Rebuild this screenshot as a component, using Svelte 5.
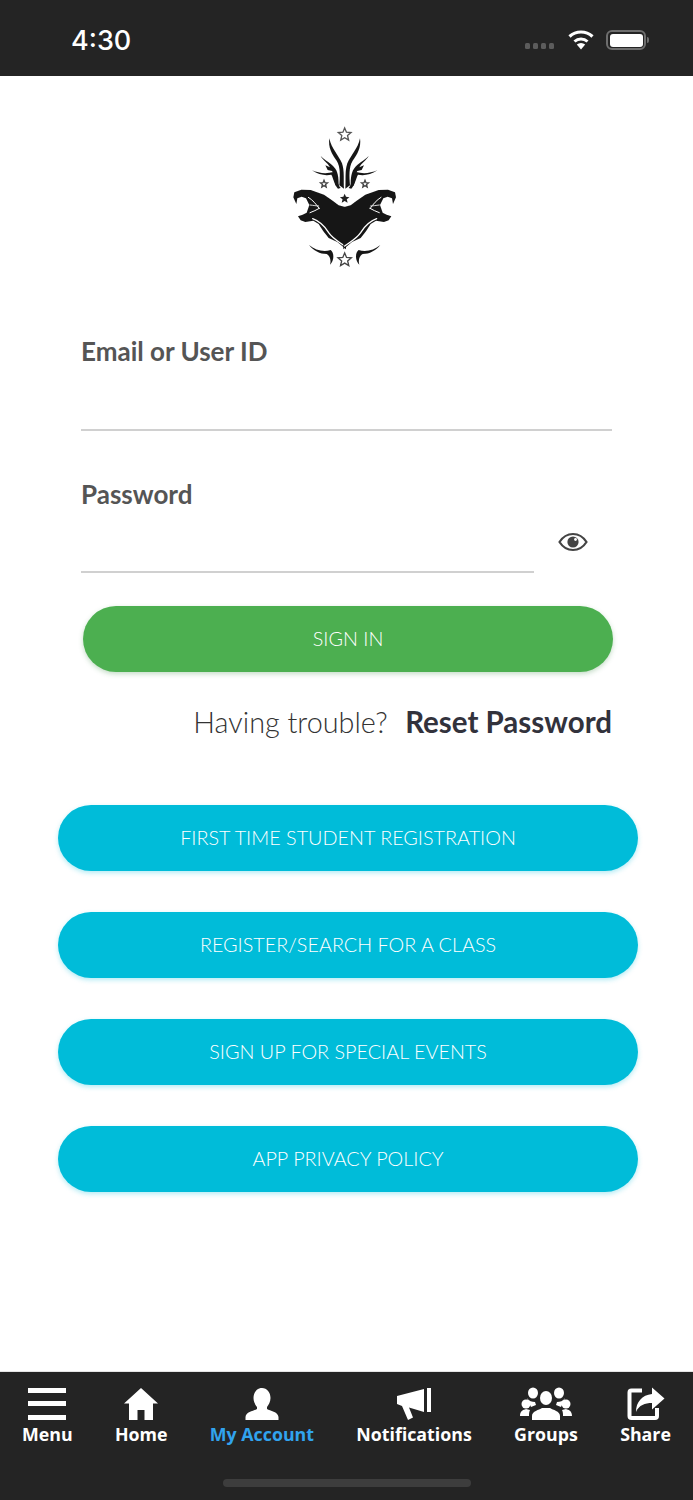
<script>
  const actions = ['FIRST TIME STUDENT REGISTRATION','REGISTER/SEARCH FOR A CLASS','SIGN UP FOR SPECIAL EVENTS','APP PRIVACY POLICY'];
  const star = (cx, cy, r) => {
    let p = [];
    for (let i = 0; i < 10; i++) {
      const a = -Math.PI / 2 + i * Math.PI / 5, q = i % 2 ? r * 0.45 : r;
      p.push((cx + q * Math.cos(a)).toFixed(1) + ',' + (cy + q * Math.sin(a)).toFixed(1));
    }
    return p.join(' ');
  };
</script>

<div class="page">
  <header class="status">
    <span class="time">4:30</span>
    <div class="status-icons">
      <div class="dots"><i></i><i></i><i></i><i></i></div>
      <svg class="wifi" width="28" height="21" viewBox="0 0 28 21">
        <path d="M14 20.5 9.8 15.6a6.200 6.200 0 0 1 8.400 0Z" fill="#fff"/>
        <path d="M7.500 12.500a9.600 9.600 0 0 1 13 0" fill="none" stroke="#fff" stroke-width="3"/>
        <path d="M2.500 7.500a17 17 0 0 1 23 0" fill="none" stroke="#fff" stroke-width="3.200"/>
      </svg>
      <div class="battery"><div class="fill"></div></div>
      <div class="nub"></div>
    </div>
  </header>

  <main class="content">
    <svg class="logo" width="170" height="170" viewBox="0 0 510 510">
      <defs>
        <filter id="soft" x="-5%" y="-5%" width="110%" height="110%"><feGaussianBlur stdDeviation="1.100"/></filter>
        <g id="half">
          <g fill="#161616">
            <path d="M208 85C204 112 216 134 230 152 242 170 240 200 238 226L252 236C250 214 254 182 246 160 236 136 214 116 208 85Z"/>
            <path d="M182 138C190 152 203 158 210 172L196 166 203 180 216 183C224 194 224 210 226 226L236 232C236 212 236 190 226 176 214 160 196 152 182 138Z"/>
            <path d="M156 181C176 194 196 198 214 194 220 204 222 222 234 236L242 234C230 220 230 198 220 186 200 192 176 190 156 181Z"/>
            <path d="M258 292 L236 286 L218 272 L192 254 L152 240 L124 239 L103 247 L100 262 L109 282 L112 265 L125 260 L138 265 L148 285 L140 308 L128 314 L114 319 L122 331 L136 336 L160 332 L176 342 L190 364 L206 384 L232 396 L258 418Z"/>
            <path d="M147 405C166 420 190 428 212 420 224 430 222 452 210 464 214 450 210 438 200 432 180 432 160 422 147 405Z"/>
          </g>
          <g fill="none" stroke="#fff" stroke-linecap="round">
            <path d="M145 262C158 270 168 282 178 296" stroke-width="3"/>
            <path d="M150 308C160 304 170 300 178 295" stroke-width="3"/>
            <path d="M150 285C160 286 170 288 176 288" stroke-width="2.500"/>
            <path d="M158 326C180 334 194 348 206 368 218 386 238 396 254 408" stroke-width="4"/>
          </g>
        </g>
      </defs>
      <g filter="url(#soft)">
        <use href="#half"/>
        <use href="#half" transform="translate(508 0) scale(-1 1)"/>
        <polygon points={star(254,74,20)} fill="#fff" stroke="#555" stroke-width="4"/>
        <polygon points={star(192,222,11)} fill="#fff" stroke="#444" stroke-width="4"/>
        <polygon points={star(315,222,11)} fill="#fff" stroke="#444" stroke-width="4"/>
        <polygon points={star(254,266,15)} fill="#222"/>
        <polygon points={star(254,450,21)} fill="#fff" stroke="#444" stroke-width="4"/>
      </g>
    </svg>

    <section class="form">
      <label class="field email">
        <span>Email or User ID</span>
        <div class="line"></div>
      </label>
      <label class="field password">
        <span>Password</span>
        <div class="pw-row">
          <div class="line short"></div>
          <svg class="eye" width="30" height="22" viewBox="0 0 30 22">
            <path d="M1.500 11C5 5.500 9.500 3 15 3s10 2.500 13.500 8C25 16.500 20.500 19 15 19S5 16.500 1.500 11Z" fill="none" stroke="#444" stroke-width="2.200"/>
            <circle cx="15" cy="11" r="5.600" fill="#444"/>
            <circle cx="17.500" cy="8.500" r="1.400" fill="#fff"/>
          </svg>
        </div>
      </label>
      <button class="pill green">SIGN IN</button>
      <p class="trouble">Having trouble?<b>Reset Password</b></p>
    </section>

    <nav class="actions">
      {#each actions as a}
        <button class="pill cyan">{a}</button>
      {/each}
    </nav>
  </main>

  <footer class="tabbar">
    <div class="tabs">
      <div class="tab">
        <svg width="40" height="34" viewBox="0 0 40 34"><path d="M1 1h38v5H1zM1 14h38v5H1zM1 28h38v5H1z" fill="#fff"/></svg>
        <span>Menu</span>
      </div>
      <div class="tab">
        <svg width="36" height="34" viewBox="0 0 36 34"><path d="M18 1 35 16.500H30V33H21.500V23H14.500V33H6V16.500H1Z" fill="#fff"/></svg>
        <span>Home</span>
      </div>
      <div class="tab active">
        <svg width="34" height="34" viewBox="0 0 34 34"><path d="M17 1c5 0 8.500 4.500 8.500 10 0 4-2 7-3.500 9v2c3 2 11 2.500 11.500 8V33H.5v-3c.5-5.500 8.500-6 11.500-8v-2c-1.500-2-3.500-5-3.500-9C8.500 5.500 12 1 17 1Z" fill="#fff"/></svg>
        <span>My Account</span>
      </div>
      <div class="tab">
        <svg width="36" height="34" viewBox="0 0 36 34"><path d="M1 9 28 2V25L13 20.500 17 30.500 12 33 6 19 1 17ZM31 1h4v24h-4Z" fill="#fff"/></svg>
        <span>Notifications</span>
      </div>
      <div class="tab">
        <svg width="54" height="34" viewBox="0 0 54 34">
          <g fill="#fff">
            <ellipse cx="14" cy="6" rx="5" ry="5.500"/><ellipse cx="40" cy="6" rx="5" ry="5.500"/>
            <ellipse cx="27" cy="11" rx="6" ry="7"/>
            <ellipse cx="7" cy="17" rx="4.500" ry="4.500"/><ellipse cx="47" cy="17" rx="4.500" ry="4.500"/>
            <path d="M13 33v-4c0-5 7-6 10-8h8c3 2 10 3 10 8v4Z"/>
            <path d="M1 29c0-5 3-6 6-7l4 1c-1 2-1 4-1 6ZM53 29c0-5-3-6-6-7l-4 1c1 2 1 4 1 6Z"/>
            <path d="M8 11c2 3 5 4 8 4l1 3-5 2ZM46 11c-2 3-5 4-8 4l-1 3 5 2Z"/>
          </g>
        </svg>
        <span>Groups</span>
      </div>
      <div class="tab">
        <svg width="38" height="34" viewBox="0 0 38 34">
          <path d="M15 3.500H4.500Q2.500 3.500 2.500 5.500V29Q2.500 31 4.500 31H28Q30 31 30 29V21" fill="none" stroke="#fff" stroke-width="4"/>
          <path d="M25 .5 37.500 11.500 25 22.500V16C18 16 12 18 9 25 9 15 15 8 25 7Z" fill="#fff"/>
        </svg>
        <span>Share</span>
      </div>
    </div>
    <div class="home-bar"></div>
  </footer>
</div>

<style>
  :global(body) { margin: 0; background: #fff; }
  .page { width: 693px; height: 1500px; display: flex; flex-direction: column; font-family: Lato, "Liberation Sans", sans-serif; overflow: hidden; }

  .status { height: 76px; flex: none; background: #242424; display: flex; align-items: center; justify-content: space-between; padding: 4px 44px 0 71px; box-sizing: border-box; color: #fff; }
  .time { font-family: Inter, Roboto, sans-serif; font-size: 27px; font-weight: 500; }
  .status-icons { display: flex; align-items: center; }
  .dots { display: flex; gap: 2.500px; margin-right: 13px; margin-top: 12px; }
  .dots i { width: 5.500px; height: 5.500px; border-radius: 1.500px; background: #5c5c5c; }
  .wifi { margin-right: 11px; margin-top: -2px; }
  .battery { width: 40px; height: 20px; box-sizing: border-box; border: 2px solid #6e6e6e; border-radius: 6px; padding: 1.500px; }
  .fill { height: 100%; border-radius: 3px; background: #fff; }
  .nub { width: 2px; height: 6px; margin-left: 1px; background: #6e6e6e; border-radius: 0 2px 2px 0; }

  .content { flex: 1; display: flex; flex-direction: column; align-items: stretch; }
  .logo { display: block; margin: 34px 0 0 260px; }

  .form { padding: 0 81px; display: flex; flex-direction: column; }
  .field { display: block; }
  .field span { display: block; font-size: 26px; line-height: 32px; font-weight: 700; color: #555; }
  .line { height: 2px; background: #d0d0d0; }
  .email { margin-top: 55px; }
  .email .line { margin-top: 62px; }
  .password { margin-top: 47px; }
  .pw-row { display: flex; align-items: flex-end; margin-top: 61px; position: relative; }
  .short { width: 453px; }
  .eye { position: absolute; left: 477px; top: -40px; }

  .pill { display: block; height: 66px; border: 0; border-radius: 33px; color: #fff; font-family: Lato, sans-serif; font-size: 19.800px; font-weight: 300; padding: 0 0 2px; }
  .green { background: #4caf50; width: 530px; margin: 33px 0 0 2px; box-shadow: 0 2px 5px rgba(60,140,70,.3); }
  .trouble { margin: 30px 0 0; text-align: right; font-size: 28.800px; line-height: 40px; font-weight: 300; color: #333; }
  .trouble b { font-size: 29.500px; font-weight: 700; color: #32323c; margin-left: 17.500px; }

  .actions { margin: 63px 55px 0 58px; display: flex; flex-direction: column; gap: 41px; }
  .cyan { background: #00bcd9; width: 100%; box-shadow: 0 2px 5px rgba(0,188,217,.3); }

  .tabbar { height: 129px; flex: none; box-sizing: border-box; background: #242424; border-top: 1px solid #e4e4e4; position: relative; }
  .tabs { display: flex; justify-content: space-between; padding: 15px 22px 0; }
  .tab { display: flex; flex-direction: column; align-items: center; color: #fff; font-family: "Open Sans", sans-serif; font-weight: 700; font-size: 17.800px; line-height: 24px; }
  .tab svg { display: block; margin-bottom: 1px; }
  .active { color: #31a3ee; }
  .home-bar { position: absolute; left: 223px; bottom: 13px; width: 248px; height: 8px; border-radius: 4px; background: #3d3d3d; }
</style>
